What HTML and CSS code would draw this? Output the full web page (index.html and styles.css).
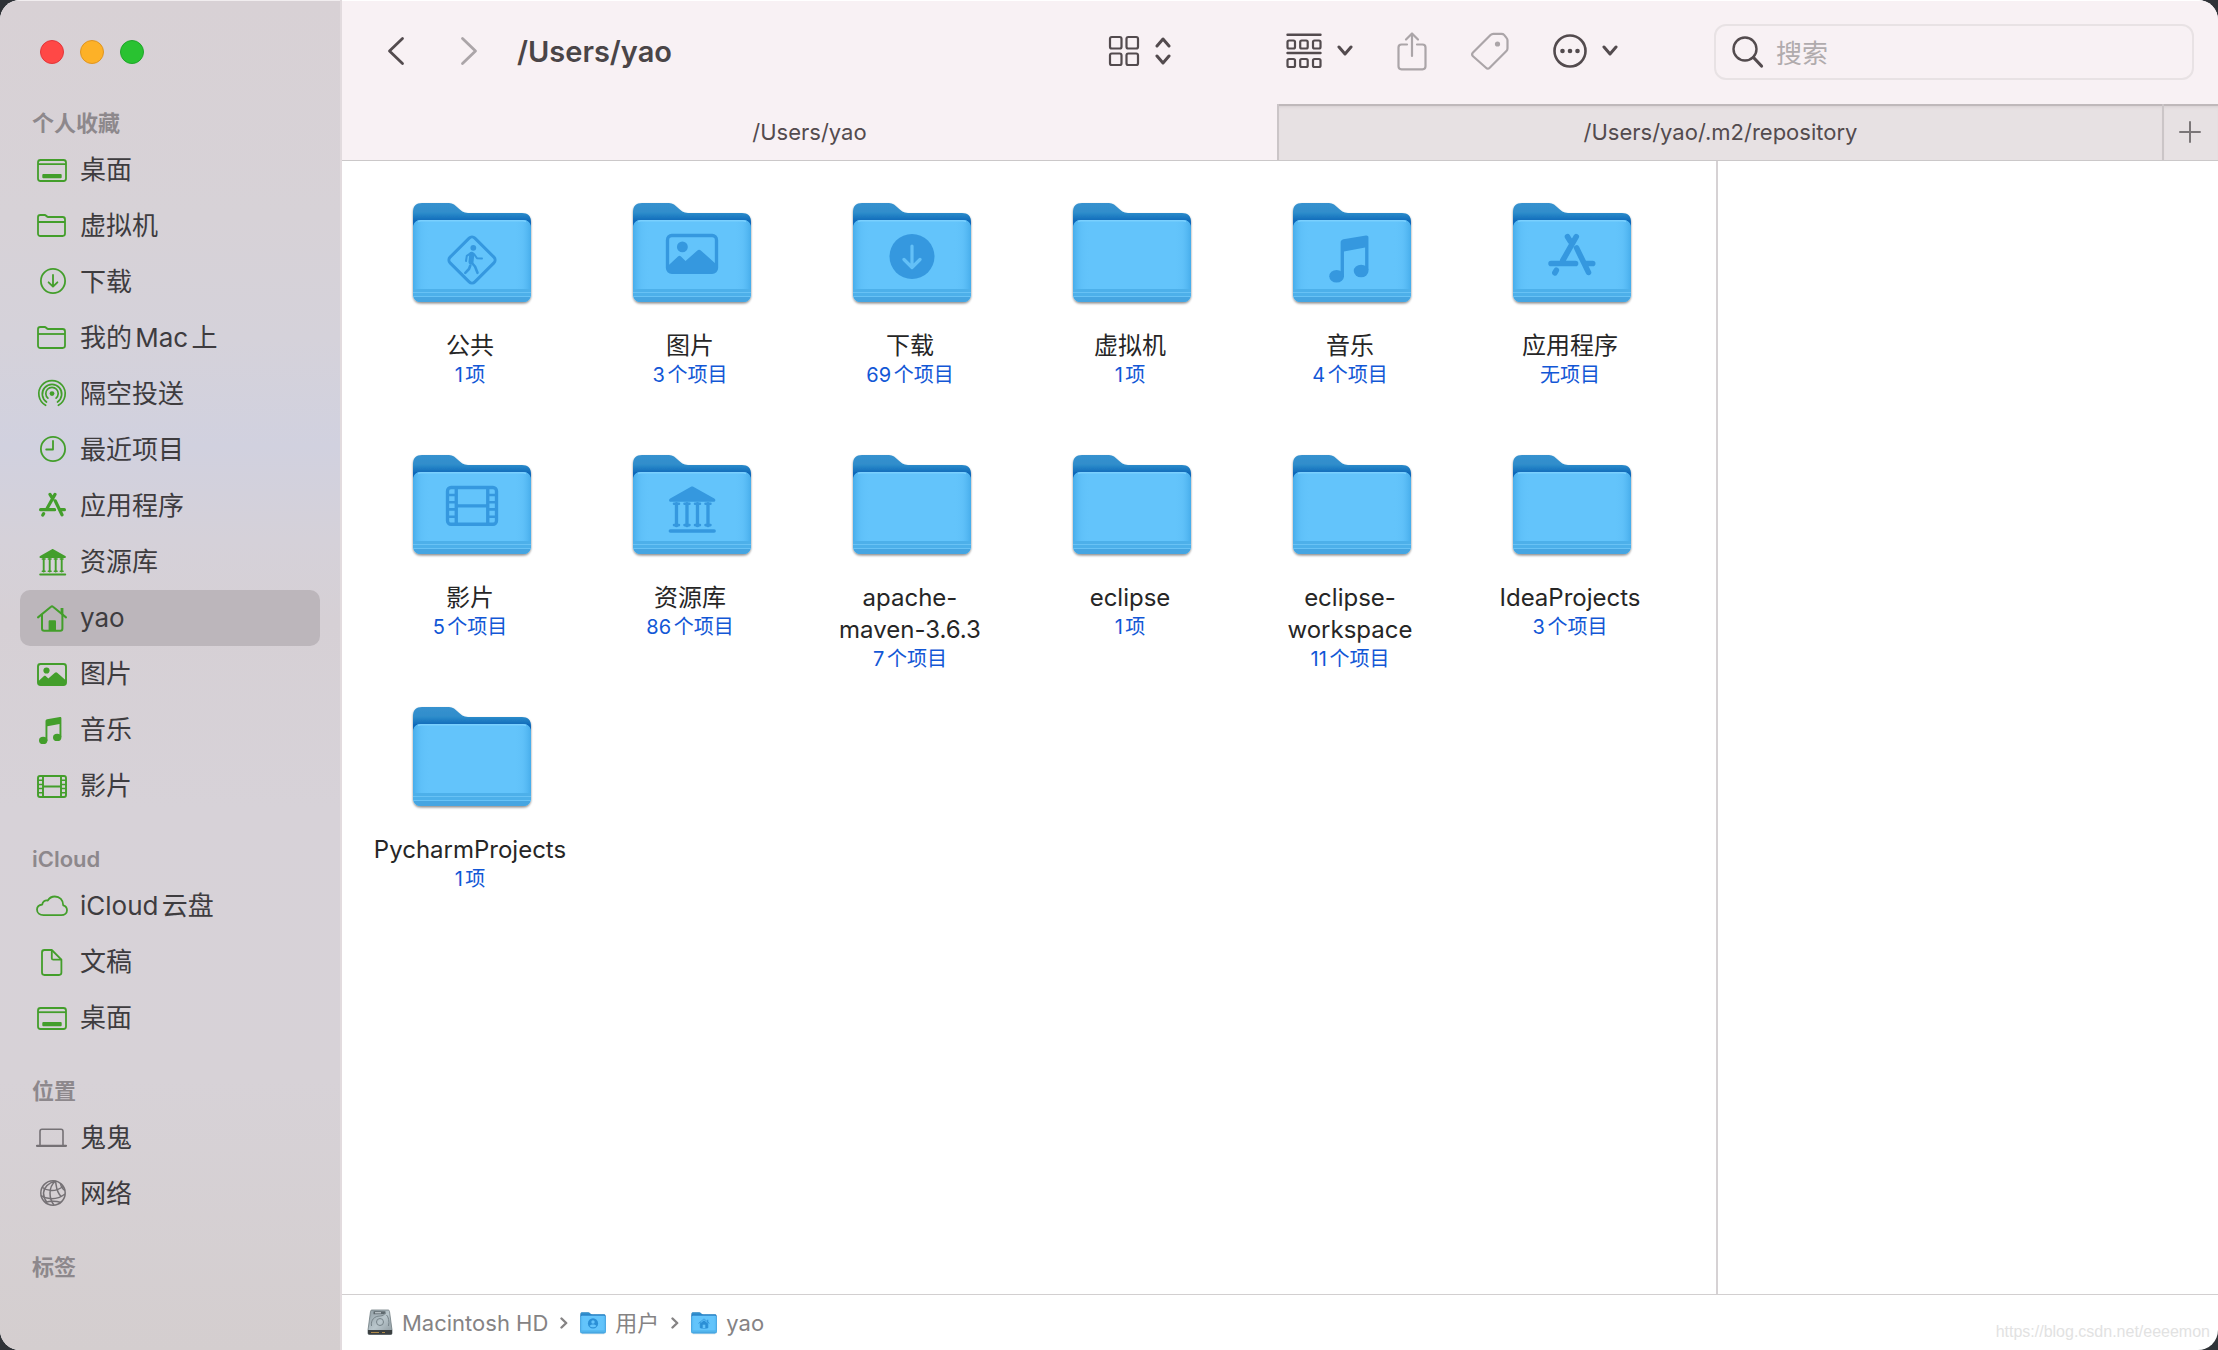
FILE: index.html
```html
<!DOCTYPE html>
<html lang="zh-CN">
<head>
<meta charset="utf-8">
<meta name="viewport" content="width=device-width, initial-scale=1">
<title>/Users/yao</title>
<link rel="stylesheet" href="styles.css">
</head>
<body>
<svg class="sprite" width="0" height="0" aria-hidden="true">
  <defs>
    <linearGradient id="g-back" x1="0" y1="0" x2="0" y2="1">
      <stop offset="0" stop-color="#3792cf"/><stop offset=".1" stop-color="#2f8dcb"/><stop offset=".19" stop-color="#0a66b8"/><stop offset="1" stop-color="#0a66b8"/>
    </linearGradient>
    <linearGradient id="g-edge" x1="0" y1="0" x2="1" y2="0">
      <stop offset="0" stop-color="#3aa3e4" stop-opacity=".7"/><stop offset=".07" stop-color="#55b8f3" stop-opacity=".3"/><stop offset=".15" stop-color="#64c4fb" stop-opacity="0"/>
      <stop offset=".85" stop-color="#64c4fb" stop-opacity="0"/><stop offset=".93" stop-color="#55b8f3" stop-opacity=".3"/><stop offset="1" stop-color="#3aa3e4" stop-opacity=".7"/>
    </linearGradient>
    <linearGradient id="g-disk" x1="0" y1="0" x2="1" y2="1">
      <stop offset="0" stop-color="#8f9ca3"/><stop offset=".5" stop-color="#b9c6cc"/><stop offset="1" stop-color="#8b979d"/>
    </linearGradient>
    <filter id="f-shadow" x="-10%" y="-10%" width="120%" height="125%">
      <feDropShadow dx="0" dy="1.5" stdDeviation="1.2" flood-color="#000" flood-opacity=".45"/>
    </filter>
  </defs>

  <symbol id="desktop" viewBox="0 0 32 32"><g fill="none" stroke="currentColor" stroke-width="1.8"><rect x="2" y="6" width="28" height="21" rx="2.5"/><path d="M2 10.2h28"/></g><rect x="6.3" y="20" width="19.4" height="4.2" rx="1" fill="currentColor"/></symbol>
  <symbol id="folder-line" viewBox="0 0 32 32"><g fill="none" stroke="currentColor" stroke-width="1.8" stroke-linejoin="round"><path d="M2 7.2C2 5.700 2.900 5 4.400 5h4.200c1.600 0 2 2 3.600 2h14.400C28.200 7 29 7.900 29 9.400v14.200c0 1.600-.8 2.400-2.400 2.400H4.400C2.900 26 2 25.200 2 23.600z"/><path d="M2 12h27"/></g></symbol>
  <symbol id="download" viewBox="0 0 32 32"><g fill="none" stroke="currentColor" stroke-width="1.8" stroke-linecap="round" stroke-linejoin="round"><circle cx="17" cy="15" r="12.100"/><path d="M17 9v11.500M12.600 16.300l4.400 4.400 4.400-4.400"/></g></symbol>
  <symbol id="airdrop" viewBox="0 0 32 32"><g fill="none" stroke="currentColor" stroke-width="1.700" stroke-linecap="round"><path d="M9.600 27.300a13.200 13.200 0 1 1 12.800 0"/><path d="M10.500 24a9.700 9.700 0 1 1 11 0"/><path d="M11.900 20.200a6.200 6.200 0 1 1 8.200 0"/></g><circle cx="16" cy="15.600" r="2.400" fill="currentColor"/></symbol>
  <symbol id="clock" viewBox="0 0 32 32"><g fill="none" stroke="currentColor" stroke-width="1.8" stroke-linecap="round" stroke-linejoin="round"><circle cx="17" cy="15" r="12.100"/><path d="M17 7v8.500h-6.800"/></g></symbol>
  <symbol id="apps" viewBox="0 0 32 32"><path fill="none" stroke="currentColor" stroke-width="3.200" stroke-linecap="round" d="M19 4.400 11.300 18M14 4.400l1.700 2.800M19.200 10.800 26 24.800M4.600 19.700h14M24.800 19.700h3.600M7.600 23.600l-.8 1.400"/></symbol>
  <symbol id="library" viewBox="0 0 32 32"><path fill="currentColor" d="M16 3.300c.4-.3.900-.3 1.300 0l12 6.700c1 .7.700 1.900-.3 1.900H4.400c-1 0-1.300-1.200-.3-1.900z"/><g fill="none" stroke="currentColor" stroke-linecap="round"><path stroke-width="1.900" d="M7.700 13v12.500M13.700 13v12.500M19.700 13v12.500M25.700 13v12.500"/><path stroke-width="1.500" d="M6.300 13h2.800M12.300 13h2.800M18.300 13h2.800M24.300 13h2.800M6.300 25.200h2.800M12.300 25.200h2.800M18.300 25.200h2.800M24.300 25.200h2.800"/><path stroke-width="2" d="M4.200 28.600h25"/></g></symbol>
  <symbol id="home" viewBox="0 0 32 32"><g fill="none" stroke="currentColor" stroke-width="2" stroke-linecap="round" stroke-linejoin="round"><path d="M2 15.400 15 4.800c.7-.6 1.300-.6 2 0l13 10.600"/><path d="M6 13v13.500c0 1.500.7 2.200 2.200 2.200h16c1.500 0 2.200-.7 2.200-2.200V13"/></g><path fill="currentColor" d="M24.600 6h2.800v7.400l-2.800-2.200zM12.600 28.700v-9c0-.9.500-1.400 1.400-1.400h4.600c.9 0 1.400.5 1.400 1.400v9z"/></symbol>
  <symbol id="picture" viewBox="0 0 32 32"><rect x="2" y="6" width="28" height="21" rx="2.500" fill="none" stroke="currentColor" stroke-width="1.900"/><circle cx="10.500" cy="12.500" r="3.100" fill="currentColor"/><path fill="currentColor" d="M2 23.500 8 18c.6-.5 1.100-.5 1.700 0l2.600 2.600 6.600-5.900c.8-.7 1.500-.7 2.300 0L30 22.500V25c0 1.200-.8 2-2 2H4c-1.200 0-2-.8-2-2z"/></symbol>
  <symbol id="music" viewBox="0 0 32 32"><path fill="currentColor" d="M9.500 7.200c0-1 .6-1.700 1.600-1.900L24 3.100c.8-.1 1.400.3 1.400 1.100V23h-1.900V10l-12.100 2.300V27H9.500z"/><ellipse cx="7.200" cy="26.400" rx="4.200" ry="3.600" fill="currentColor"/><ellipse cx="21.200" cy="23.400" rx="4.200" ry="3.600" fill="currentColor"/></symbol>
  <symbol id="film" viewBox="0 0 32 32"><g fill="none" stroke="currentColor" stroke-width="1.900"><rect x="2" y="6" width="28" height="21" rx="2"/><path d="M7 6v21M25 6v21M7 16.500h18"/><path stroke-width="1.500" d="M2 10.300h5M2 14.400h5M2 18.500h5M2 22.700h5M25 10.300h5M25 14.400h5M25 18.500h5M25 22.700h5"/></g></symbol>
  <symbol id="cloud" viewBox="0 0 32 32"><path fill="none" stroke="currentColor" stroke-width="1.800" stroke-linejoin="round" d="M7.600 25.200h17.600c3.300 0 5.800-2 5.800-5 0-2.600-1.600-4.300-3.800-4.900.1-5.200-3.600-8.800-8.400-8.800-3.200 0-5.500 1.500-7 4-2.900-.6-5.300 1.200-5.500 4C3.300 14.900 1 16.700 1 19.600c0 3.200 2.700 5.600 6.600 5.600z"/></symbol>
  <symbol id="doc" viewBox="0 0 32 32"><g fill="none" stroke="currentColor" stroke-width="1.800" stroke-linejoin="round"><path d="M6 6.400C6 4.800 6.800 4 8.400 4h7.400L25.400 13.600v13c0 1.600-.8 2.400-2.400 2.400H8.400C6.800 29 6 28.200 6 26.600z"/><path d="M15.800 4v8.200c0 1 .5 1.500 1.500 1.500h8"/></g></symbol>
  <symbol id="laptop" viewBox="0 0 32 32"><path fill="none" stroke="currentColor" stroke-width="1.600" d="M4 23.500V9.400C4 8 4.700 7.300 6 7.300h19c1.300 0 2 .7 2 2.100v14.100"/><path stroke="currentColor" stroke-width="2.200" stroke-linecap="round" d="M1 23.800h29"/></symbol>
  <symbol id="globe" viewBox="0 0 32 32"><g fill="none" stroke="currentColor" stroke-width="1.500"><circle cx="17" cy="15" r="12.200"/><path d="M19.500 3c-3.500 3-5.500 7-5.500 12s1.500 9 4 12M19.500 3c-7 2-11.500 6-12 12 0 4 1.500 7 3.500 9.500M19.500 3c1 5 .5 11 5.800 15.500M24.500 5.500c.5 3 2 5.500 4.500 7"/><path d="M6.500 9.500c4.500 3.500 12.500 5 20.500-1M5 17.500c5 3.500 15 5.500 24-1.500M9 24.500c5-1.500 11-1.500 16 0"/></g></symbol>

  <symbol id="folder" viewBox="0 0 128 128">
    <g filter="url(#f-shadow)">
      <path fill="url(#g-back)" d="M7 22c0-6 3-9 9-9h27c8 0 10 10 19 10h54c6 0 9 3 9 9v70c0 6-3 9-9 9H16c-6 0-9-3-9-9z"/>
      <path fill="#64c4fb" d="M7 39c0-6 3-9 8-9h102c5 0 8 3 8 9v64c0 6-3 9-8 9H15c-5 0-8-3-8-9z"/>
    </g>
    <path fill="url(#g-edge)" d="M7 39c0-6 3-9 8-9h102c5 0 8 3 8 9v64c0 6-3 9-8 9H15c-5 0-8-3-8-9z"/>
    <path fill="none" stroke="#7ad0fe" stroke-width="1.500" d="M12 31.500c1-.6 2-.8 3-.8h102c1 0 2 .2 3 .8"/>
    <path fill="#4db0ea" d="M7 99h118v4c0 6-3 9-8 9H15c-5 0-8-3-8-9z"/>
    <path fill="none" stroke="#68c2f5" stroke-width="1.200" d="M7 102.500h118M7 106.500h118"/>
    <path fill="#46a5e1" d="M7.800 107h116.400c-1 3.300-3.600 5-7.200 5H15c-3.600 0-6.200-1.700-7.200-5z"/>
  </symbol>
  <symbol id="walk" viewBox="0 0 128 128">
    <rect x="48.500" y="52.500" width="35" height="35" rx="4" transform="rotate(45 66 70)" fill="none" stroke="currentColor" stroke-width="3"/>
    <circle cx="67.300" cy="57.800" r="2.900" fill="currentColor"/>
    <g fill="none" stroke="currentColor" stroke-linecap="round" stroke-linejoin="round"><path stroke-width="5" d="M65.800 64.300 65 72"/><path stroke-width="2" d="M64.500 63.300 60.800 65.800 60 71M68 64l3 4.300 5 .2"/><path stroke-width="2.600" d="m66 73 3 3.500 2.500 6.300M64.300 75.500 63 79l-3.700 3.800"/></g>
  </symbol>
  <symbol id="arrow-disc" viewBox="0 0 128 128"><circle cx="66" cy="66.500" r="22.500" fill="currentColor"/><path fill="none" stroke="#63c0f7" stroke-width="3.200" stroke-linecap="round" stroke-linejoin="round" d="M66 56v20.500M58 69.500l8 8 8-8"/></symbol>
  <symbol id="chev-down" viewBox="0 0 16 12"><path fill="none" stroke="currentColor" stroke-width="3" stroke-linecap="round" stroke-linejoin="round" d="m2 2 6 7 6-7"/></symbol>
  <symbol id="chev-path" viewBox="0 0 8 12"><path fill="none" stroke="currentColor" stroke-width="2.400" stroke-linecap="round" stroke-linejoin="round" d="m1.500 1.500 4.700 4.500-4.700 4.500"/></symbol>
</svg>

<div class="window">
  <aside class="sidebar">
    <div class="lights">
      <button class="light red" aria-label="关闭"></button>
      <button class="light amber" aria-label="最小化"></button>
      <button class="light green" aria-label="缩放"></button>
    </div>
    <nav class="sections">
      <section>
        <h2>个人收藏</h2>
        <ul>
          <li><a href="#"><svg class="icon"><use href="#desktop"/></svg>桌面</a></li>
          <li><a href="#"><svg class="icon"><use href="#folder-line"/></svg>虚拟机</a></li>
          <li><a href="#"><svg class="icon"><use href="#download"/></svg>下载</a></li>
          <li><a href="#"><svg class="icon"><use href="#folder-line"/></svg>我的Mac上</a></li>
          <li><a href="#"><svg class="icon"><use href="#airdrop"/></svg>隔空投送</a></li>
          <li><a href="#"><svg class="icon"><use href="#clock"/></svg>最近项目</a></li>
          <li><a href="#"><svg class="icon"><use href="#apps"/></svg>应用程序</a></li>
          <li><a href="#"><svg class="icon"><use href="#library"/></svg>资源库</a></li>
          <li><a href="#" class="current" aria-current="page"><svg class="icon"><use href="#home"/></svg>yao</a></li>
          <li><a href="#"><svg class="icon"><use href="#picture"/></svg>图片</a></li>
          <li><a href="#"><svg class="icon"><use href="#music"/></svg>音乐</a></li>
          <li><a href="#"><svg class="icon"><use href="#film"/></svg>影片</a></li>
        </ul>
      </section>
      <section>
        <h2>iCloud</h2>
        <ul>
          <li><a href="#"><svg class="icon"><use href="#cloud"/></svg>iCloud云盘</a></li>
          <li><a href="#"><svg class="icon"><use href="#doc"/></svg>文稿</a></li>
          <li><a href="#"><svg class="icon"><use href="#desktop"/></svg>桌面</a></li>
        </ul>
      </section>
      <section>
        <h2>位置</h2>
        <ul class="devices">
          <li><a href="#"><svg class="icon"><use href="#laptop"/></svg>鬼鬼</a></li>
          <li><a href="#"><svg class="icon"><use href="#globe"/></svg>网络</a></li>
        </ul>
      </section>
      <section>
        <h2>标签</h2>
      </section>
    </nav>
  </aside>

  <main class="main">
    <header class="toolbar">
      <button class="tool" aria-label="后退"><svg width="20" height="32" viewBox="0 0 20 32"><path fill="none" stroke="currentColor" stroke-width="2.800" stroke-linecap="round" stroke-linejoin="round" d="M16.500 3.500 3.500 16l13 12.500"/></svg></button>
      <button class="tool forward" aria-label="前进" disabled><svg width="20" height="32" viewBox="0 0 20 32"><path fill="none" stroke="currentColor" stroke-width="2.800" stroke-linecap="round" stroke-linejoin="round" d="m3.500 3.500 13 12.500-13 12.500"/></svg></button>
      <h1>/Users/yao</h1>
      <button class="tool view" aria-label="显示方式">
        <svg width="32" height="32" viewBox="0 0 32 32"><g fill="none" stroke="currentColor" stroke-width="2.200"><rect x="2" y="2" width="11.500" height="11.500" rx="1.800"/><rect x="18.500" y="2" width="11.500" height="11.500" rx="1.800"/><rect x="2" y="18.500" width="11.500" height="11.500" rx="1.800"/><rect x="18.500" y="18.500" width="11.500" height="11.500" rx="1.800"/></g></svg>
        <svg width="16" height="28" viewBox="0 0 16 28"><path fill="none" stroke="currentColor" stroke-width="3" stroke-linecap="round" stroke-linejoin="round" d="m2 9 6-7 6 7M2 19l6 7 6-7"/></svg>
      </button>
      <button class="tool group" aria-label="分组">
        <svg width="36" height="36" viewBox="0 0 36 36"><path stroke="currentColor" stroke-width="2.400" stroke-linecap="round" d="M1.500 1.700h33M1.500 20h33"/><g fill="none" stroke="currentColor" stroke-width="2.200"><rect x="1.500" y="7.500" width="7.500" height="8" rx="1.500"/><rect x="14.200" y="7.500" width="7.500" height="8" rx="1.500"/><rect x="27" y="7.500" width="7.500" height="8" rx="1.500"/><rect x="1.500" y="26" width="7.500" height="8" rx="1.500"/><rect x="14.200" y="26" width="7.500" height="8" rx="1.500"/><rect x="27" y="26" width="7.500" height="8" rx="1.500"/></g></svg>
        <svg width="16" height="12"><use href="#chev-down"/></svg>
      </button>
      <button class="tool share" aria-label="共享" disabled><svg width="30" height="40" viewBox="0 0 30 40"><g fill="none" stroke="currentColor" stroke-width="2.200" stroke-linecap="round" stroke-linejoin="round"><path d="M10 13.500H4.500c-2 0-3 1-3 3v18.800c0 2 1 3 3 3h21c2 0 3-1 3-3V16.500c0-2-1-3-3-3H20"/><path d="M15 25V2.500M9 8.500l6-6 6 6"/></g></svg></button>
      <button class="tool tag" aria-label="标签" disabled><svg width="38" height="38" viewBox="0 0 38 38"><path fill="none" stroke="currentColor" stroke-width="2.200" stroke-linejoin="round" d="M2 20.500 19.500 3c.8-.8 1.700-1.200 2.800-1.200h8.200c1.100 0 1.900.3 2.600 1.100l2.600 3.200c.6.700.8 1.400.8 2.300v7.800c0 1.100-.3 2-1.100 2.800L18.700 35.700c-1.200 1.200-2.500 1.200-3.700 0L2 24.200c-1.200-1.200-1.200-2.500 0-3.700z"/><circle cx="26.500" cy="12" r="2.600" fill="currentColor"/></svg></button>
      <button class="tool more" aria-label="更多">
        <svg width="34" height="34" viewBox="0 0 34 34"><circle cx="17" cy="17" r="15.500" fill="none" stroke="currentColor" stroke-width="2.600"/><g fill="currentColor"><circle cx="9.500" cy="17" r="2.300"/><circle cx="17" cy="17" r="2.300"/><circle cx="24.500" cy="17" r="2.300"/></g></svg>
        <svg width="16" height="12"><use href="#chev-down"/></svg>
      </button>
      <label class="search">
        <svg width="32" height="34" viewBox="0 0 32 34"><circle cx="13" cy="14" r="11.500" fill="none" stroke="currentColor" stroke-width="2.400"/><path stroke="currentColor" stroke-width="3.200" stroke-linecap="round" d="m21.500 22.500 8 8.500"/></svg>
        <input type="search" placeholder="搜索" aria-label="搜索">
      </label>
    </header>

    <div class="tabs" role="tablist">
      <button class="tab active" role="tab" aria-selected="true">/Users/yao</button>
      <button class="tab" role="tab" aria-selected="false">/Users/yao/.m2/repository</button>
      <button class="tab-add" aria-label="新建标签页"><svg width="22" height="22" viewBox="0 0 22 22"><path stroke="currentColor" stroke-width="2" stroke-linecap="round" d="M11 1v20M1 11h20"/></svg></button>
    </div>

    <div class="content">
      <ul class="files">
        <li><a href="#"><svg class="big"><use href="#folder"/><use href="#walk"/></svg><span class="name">公共</span><span class="count">1项</span></a></li>
        <li><a href="#"><svg class="big"><use href="#folder"/><use href="#picture" x="38" y="35" width="56" height="56"/></svg><span class="name">图片</span><span class="count">3个项目</span></a></li>
        <li><a href="#"><svg class="big"><use href="#folder"/><use href="#arrow-disc"/></svg><span class="name">下载</span><span class="count">69个项目</span></a></li>
        <li><a href="#"><svg class="big"><use href="#folder"/></svg><span class="name">虚拟机</span><span class="count">1项</span></a></li>
        <li><a href="#"><svg class="big"><use href="#folder"/><use href="#music" x="38" y="40" width="56" height="56"/></svg><span class="name">音乐</span><span class="count">4个项目</span></a></li>
        <li><a href="#"><svg class="big"><use href="#folder"/><use href="#apps" x="37" y="39" width="56" height="56"/></svg><span class="name">应用程序</span><span class="count">无项目</span></a></li>
        <li><a href="#"><svg class="big"><use href="#folder"/><use href="#film" x="38" y="35" width="56" height="56"/></svg><span class="name">影片</span><span class="count">5个项目</span></a></li>
        <li><a href="#"><svg class="big"><use href="#folder"/><use href="#library" x="37" y="39" width="56" height="56"/></svg><span class="name">资源库</span><span class="count">86个项目</span></a></li>
        <li><a href="#"><svg class="big"><use href="#folder"/></svg><span class="name">apache-<br>maven-3.6.3</span><span class="count">7个项目</span></a></li>
        <li><a href="#"><svg class="big"><use href="#folder"/></svg><span class="name">eclipse</span><span class="count">1项</span></a></li>
        <li><a href="#"><svg class="big"><use href="#folder"/></svg><span class="name">eclipse-<br>workspace</span><span class="count">11个项目</span></a></li>
        <li><a href="#"><svg class="big"><use href="#folder"/></svg><span class="name">IdeaProjects</span><span class="count">3个项目</span></a></li>
        <li><a href="#"><svg class="big"><use href="#folder"/></svg><span class="name">PycharmProjects</span><span class="count">1项</span></a></li>
      </ul>
      <div class="preview"></div>
    </div>

    <footer class="pathbar">
      <a href="#">
        <svg width="26" height="28" viewBox="0 0 26 28"><path fill="url(#g-disk)" stroke="#6f7b80" stroke-width=".8" d="M3.500 2.500C3.600 1.500 4.200 1 5 1h16c.8 0 1.400.5 1.500 1.500L25 21v3c0 1-.5 1.500-1.500 1.500h-21C1.500 25.500 1 25 1 24v-3z"/><path fill="#3b3f40" d="M1 21h24v3c0 1-.5 1.500-1.500 1.500h-21C1.500 25.500 1 25 1 24z"/><path stroke="#b08a4a" stroke-width="1" d="M4 23.500h8M15 23.500h3"/><rect x="6.500" y="2.300" width="12" height="3" rx=".5" fill="#5f6a6f"/><path stroke="#d9e2e5" stroke-width="1" d="M8 3.800h6"/><g fill="none" stroke="#77848a" stroke-width="1"><circle cx="13" cy="13" r="3.500"/><path d="M4.500 17c-1-6 3-10 8.500-10 3 0 5-2 5-3M21.500 17c1-5 0-9-2-11"/></g></svg>
        <span>Macintosh HD</span></a>
      <svg class="sep" width="8" height="12"><use href="#chev-path"/></svg>
      <a href="#"><svg width="26" height="28" viewBox="5 0 122 128"><use href="#folder" width="128" height="128"/><g class="emblem"><circle cx="66" cy="66" r="24"/><circle class="cut" cx="66" cy="59" r="8"/><path class="cut" d="M50 78c2-10 30-10 32 0-6 8-26 8-32 0z"/></g></svg><span>用户</span></a>
      <svg class="sep" width="8" height="12"><use href="#chev-path"/></svg>
      <a href="#"><svg width="26" height="28" viewBox="5 0 122 128"><use href="#folder" width="128" height="128"/><g class="emblem"><use href="#home" x="38" y="38" width="56" height="56"/><path d="m48 66 18-15 18 15v22H48z"/><path class="cut" d="M60 72h12v16H60z"/></g></svg><span>yao</span></a>
      <span class="watermark">https://blog.csdn.net/eeeemon</span>
    </footer>
  </main>
</div>
</body>
</html>
```
FILE: styles.css
```css
:root {
  --line: #d2cfd0;
  --bar: #f8f1f4;
  --ink: #534b4e;
  --green: #439e2b;
}

* {
  box-sizing: border-box;
}

body {
  margin: 0;
  background: #2f3237;
  font-family: Inter, "Noto Sans CJK SC", sans-serif;
  text-autospace: normal;
}

ul,
h1,
h2 {
  margin: 0;
  padding: 0;
  list-style: none;
}

a {
  color: inherit;
  text-decoration: none;
}

button {
  padding: 0;
  border: 0;
  background: none;
  color: inherit;
  font: inherit;
}

svg {
  display: block;
  flex: none;
}

.sprite {
  position: absolute;
}

.window {
  display: flex;
  min-height: 100vh;
  border-radius: 20px;
  overflow: hidden;
  background: #fff;
}

/* Sidebar */

.sidebar {
  flex: none;
  width: 342px;
  padding: 40px 20px;
  border-right: 2px solid #e2dbde;
  box-shadow: inset 0 1px #f1edef;
  background: linear-gradient(#d8d1d5 0, #d7d2d7 16%, #d5d2da 25%, #d1d1df 33%, #d5d1d9 40%, #d6d0d5 46%, #d7d2d8 60%, #d7d2d7 80%, #d4cecf 100%);
}

.lights {
  display: flex;
  gap: 16px;
  margin: 0 20px 40px;
}

.light {
  width: 24px;
  height: 24px;
  border-radius: 50%;
  border: 1px solid;
}

.red {
  background: #ff4846;
  border-color: #e2363a;
}

.amber {
  background: #fdb127;
  border-color: #df9522;
}

.green {
  background: #29c231;
  border-color: #1fa62a;
}

.sections {
  display: flex;
  flex-direction: column;
  gap: 26px;
}

.sidebar h2 {
  padding-left: 12px;
  color: #8d888c;
  font-size: 22px;
  font-weight: 600;
  line-height: 38px;
}

.sidebar li a {
  display: flex;
  align-items: center;
  gap: 12px;
  height: 56px;
  padding-left: 16px;
  border-radius: 10px;
  color: #3e3c3f;
  font-size: 26px;
  line-height: 32px;
}

.sidebar li .current {
  background: #bcb6bb;
}

.icon {
  width: 32px;
  height: 32px;
  color: var(--green);
}

.devices .icon {
  color: #757175;
}

/* Toolbar */

.main {
  flex: 1;
  min-width: 0;
  display: flex;
  flex-direction: column;
}

.toolbar {
  display: flex;
  align-items: center;
  height: 104px;
  padding: 0 24px 0 44px;
  background: var(--bar);
  box-shadow: inset 0 1px #fff;
  color: var(--ink);
}

.toolbar h1 {
  flex: 1;
  margin-left: 38px;
  padding-bottom: 2px;
  color: #4a4547;
  font-size: 29px;
  font-weight: 600;
}

.tool {
  display: flex;
  align-items: center;
  gap: 15px;
  padding-bottom: 2px;
}

.tool:disabled {
  color: #aba5a8;
}

.forward {
  margin-left: 53px;
}

.group {
  margin-left: 115px;
}

.share,
.tag,
.more {
  margin-left: 44px;
}

.search {
  display: flex;
  align-items: center;
  gap: 12px;
  width: 480px;
  height: 56px;
  margin-left: 96px;
  padding: 0 16px;
  border: 2px solid #e8e2e4;
  border-radius: 12px;
}

.search input {
  flex: 1;
  min-width: 0;
  padding: 3px 0 0;
  border: 0;
  outline: 0;
  background: none;
  font: inherit;
  font-size: 26px;
}

.search input::placeholder {
  color: #b0abad;
}

/* Tabs */

.tabs {
  display: flex;
  height: 57px;
  border-bottom: 1px solid #cbc8c9;
  background: var(--bar);
  color: var(--ink);
  font-size: 22px;
}

.tab {
  flex: 884;
}

.tab.active {
  flex: 936;
}

.tab:not(.active),
.tab-add {
  border-left: 2px solid #cbc5c7;
  background: #e7e1e3;
  box-shadow: inset 0 2px #bfb8ba, inset 0 5px 4px -3px #cdc6c8;
}

.tab-add {
  display: grid;
  place-items: center;
  width: 56px;
  padding-right: 2px;
  color: #7b7678;
}

/* Folder grid */

.content {
  flex: 1;
  display: flex;
}

.files {
  flex: 1;
  display: grid;
  grid-template-columns: repeat(auto-fill, 220px);
  grid-auto-rows: 252px;
  align-content: start;
  padding: 29px 0 0 18px;
}

.files a {
  display: flex;
  flex-direction: column;
  align-items: center;
  text-align: center;
}

.big {
  width: 128px;
  height: 128px;
  margin-bottom: 12px;
  color: #3598df;
}

.name {
  color: #262626;
  font-size: 24px;
  line-height: 32px;
}

.count {
  color: #1257d6;
  font-size: 20px;
  line-height: 26px;
}

.preview {
  width: 502px;
  border-left: 2px solid #d6d2d4;
}

/* Path bar */

.pathbar {
  display: flex;
  align-items: center;
  gap: 12px;
  height: 56px;
  padding: 0 8px 0 25px;
  border-top: 1px solid var(--line);
  color: #858384;
  font-size: 22px;
  line-height: 28px;
}

.pathbar a {
  display: flex;
  align-items: center;
  gap: 9px;
}

.emblem {
  color: #2b8fd6;
  fill: #2b8fd6;
}

.cut {
  fill: #64c4fb;
}

.watermark {
  align-self: flex-end;
  margin-left: auto;
  color: #e2e2e2;
  font-family: "Liberation Sans", Arial, sans-serif;
  font-size: 16px;
  line-height: 36px;
}
```
